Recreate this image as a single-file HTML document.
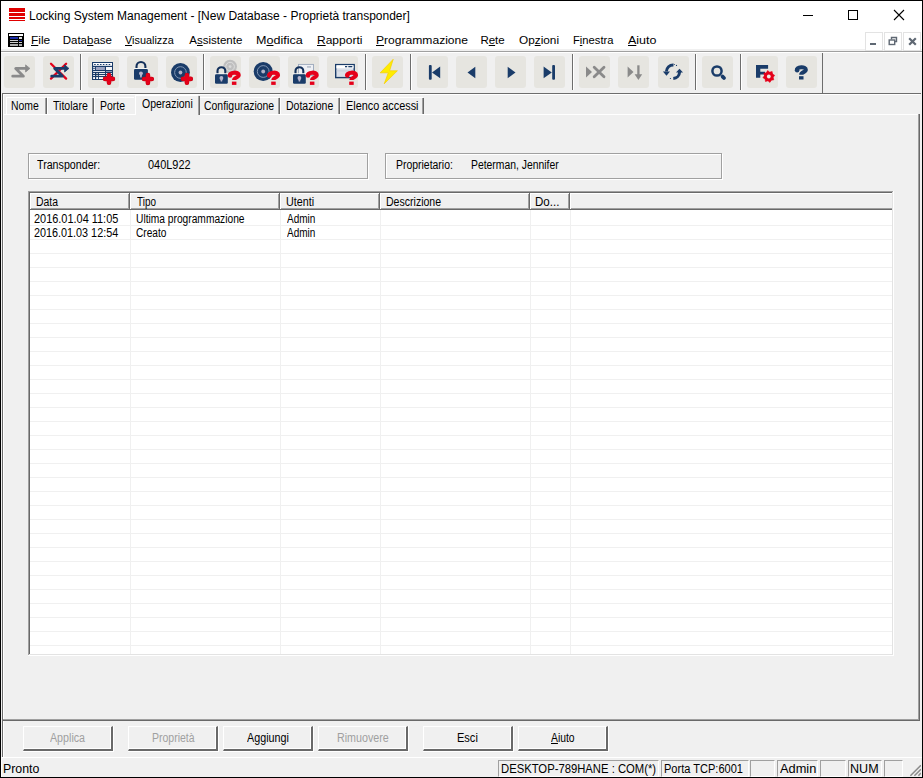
<!DOCTYPE html>
<html><head><meta charset="utf-8"><style>
html,body{margin:0;padding:0;}
body{width:923px;height:778px;position:relative;overflow:hidden;background:#f0f0f0;font-family:'Liberation Sans', sans-serif;}
.t{position:absolute;white-space:pre;line-height:13px;font-family:'Liberation Sans', sans-serif;}
.r{position:absolute;}
.u{text-decoration:underline;text-underline-offset:1px;}
svg{position:absolute;}
</style></head><body>

<div class="r" style="left:0px;top:0px;width:923px;height:51px;background:#ffffff;"></div>
<div class="r" style="left:0px;top:49px;width:923px;height:2px;background:#f0f0f0;"></div>
<div class="r" style="left:0px;top:51px;width:923px;height:1px;background:#a0a0a0;"></div>
<div class="r" style="left:0px;top:52px;width:923px;height:1px;background:#ffffff;"></div>
<div class="r" style="left:9px;top:8px;width:16px;height:4px;background:#e00000;"></div>
<div class="r" style="left:9px;top:13px;width:16px;height:3px;background:#e00000;"></div>
<div class="r" style="left:9px;top:17px;width:16px;height:2px;background:#e00000;"></div>
<div class="r" style="left:9px;top:20px;width:16px;height:1px;background:#e00000;"></div>
<div class="t" style="left:29.00px;top:9px;font-size:12px;color:#000;line-height:14px">Locking System Management - [New Database - Proprietà transponder]</div>
<div class="r" style="left:803px;top:15px;width:10px;height:1px;background:#000;"></div>
<div class="r" style="left:848px;top:10px;width:8px;height:8px;border:1px solid #000"></div>
<svg style="left:893px;top:9px" width="12" height="12" viewBox="0 0 12 12"><path d="M1 1L11 11M11 1L1 11" stroke="#000" stroke-width="1.1"/></svg>
<svg style="left:8px;top:33px" width="16" height="14" viewBox="0 0 16 14"><rect x="0" y="0" width="16" height="14" fill="#000"/><rect x="1" y="1" width="14" height="2" fill="#fff"/><rect x="2" y="4" width="8" height="2" fill="#1c2ea8"/><rect x="11" y="4" width="3" height="2" fill="#ddd"/><rect x="2" y="7" width="8" height="1" fill="#ccc"/><rect x="11" y="7" width="3" height="1" fill="#1c2ea8"/><rect x="2" y="9" width="8" height="1" fill="#ccc"/><rect x="11" y="9" width="3" height="1" fill="#ccc"/><rect x="2" y="11" width="8" height="2" fill="#aaa"/><rect x="11" y="11" width="3" height="2" fill="#aaa"/></svg>
<div class="t" style="left:30.66px;top:34px;font-size:11.5px;color:#000;transform:scaleX(1.035);transform-origin:0 0;"><span class="u">F</span>ile</div>
<div class="t" style="left:62.70px;top:34px;font-size:11.5px;color:#000;">Data<span class="u">b</span>ase</div>
<div class="t" style="left:125.40px;top:34px;font-size:11.5px;color:#000;transform:scaleX(0.944);transform-origin:0 0;"><span class="u">V</span>isualizza</div>
<div class="t" style="left:189.30px;top:34px;font-size:11.5px;color:#000;">A<span class="u">s</span>sistente</div>
<div class="t" style="left:255.71px;top:34px;font-size:11.5px;color:#000;transform:scaleX(1.090);transform-origin:0 0;">M<span class="u">o</span>difica</div>
<div class="t" style="left:316.55px;top:34px;font-size:11.5px;color:#000;transform:scaleX(1.045);transform-origin:0 0;"><span class="u">R</span>apporti</div>
<div class="t" style="left:375.55px;top:34px;font-size:11.5px;color:#000;transform:scaleX(1.051);transform-origin:0 0;"><span class="u">P</span>rogrammazione</div>
<div class="t" style="left:480.40px;top:34px;font-size:11.5px;color:#000;">R<span class="u">e</span>te</div>
<div class="t" style="left:518.70px;top:34px;font-size:11.5px;color:#000;transform:scaleX(1.026);transform-origin:0 0;">Op<span class="u">z</span>ioni</div>
<div class="t" style="left:572.83px;top:34px;font-size:11.5px;color:#000;transform:scaleX(0.973);transform-origin:0 0;">F<span class="u">i</span>nestra</div>
<div class="t" style="left:628.40px;top:34px;font-size:11.5px;color:#000;transform:scaleX(1.085);transform-origin:0 0;"><span class="u">A</span>iuto</div>
<div class="r" style="left:865px;top:32px;width:16px;height:17px;border:1px solid #e3e3e3;background:#fff"></div>
<div class="r" style="left:884px;top:32px;width:16px;height:17px;border:1px solid #e3e3e3;background:#fff"></div>
<div class="r" style="left:903px;top:32px;width:16px;height:17px;border:1px solid #e3e3e3;background:#fff"></div>
<div class="r" style="left:870px;top:43px;width:6px;height:2px;background:#5f6873;"></div>
<svg style="left:888px;top:36px" width="10" height="10" viewBox="0 0 10 10"><path d="M3.5 3.5V1.5H8.5V5.5H6.5" fill="none" stroke="#5f6873" stroke-width="1.4"/><rect x="1.2" y="4" width="5.5" height="4.5" fill="none" stroke="#5f6873" stroke-width="1.4"/></svg>
<svg style="left:908px;top:37px" width="9" height="9" viewBox="0 0 9 9"><path d="M1.2 1.2L7.8 7.8M7.8 1.2L1.2 7.8" stroke="#5f6873" stroke-width="2.2"/></svg>
<div class="r" style="left:2px;top:93px;width:919px;height:1px;background:#6d6d6d;"></div>
<div class="r" style="left:822px;top:53px;width:1px;height:40px;background:#6d6d6d;"></div>
<div class="r" style="left:4px;top:56px;width:31px;height:32px;background:#e6e5e0;border-radius:3px"></div>
<div class="r" style="left:43px;top:56px;width:31px;height:32px;background:#e6e5e0;border-radius:3px"></div>
<div class="r" style="left:88px;top:56px;width:31px;height:32px;background:#e6e5e0;border-radius:3px"></div>
<div class="r" style="left:127px;top:56px;width:31px;height:32px;background:#e6e5e0;border-radius:3px"></div>
<div class="r" style="left:166px;top:56px;width:31px;height:32px;background:#e6e5e0;border-radius:3px"></div>
<div class="r" style="left:210px;top:56px;width:31px;height:32px;background:#e6e5e0;border-radius:3px"></div>
<div class="r" style="left:249px;top:56px;width:31px;height:32px;background:#e6e5e0;border-radius:3px"></div>
<div class="r" style="left:288px;top:56px;width:31px;height:32px;background:#e6e5e0;border-radius:3px"></div>
<div class="r" style="left:327px;top:56px;width:31px;height:32px;background:#e6e5e0;border-radius:3px"></div>
<div class="r" style="left:372px;top:56px;width:31px;height:32px;background:#e6e5e0;border-radius:3px"></div>
<div class="r" style="left:417px;top:56px;width:31px;height:32px;background:#e6e5e0;border-radius:3px"></div>
<div class="r" style="left:456px;top:56px;width:31px;height:32px;background:#e6e5e0;border-radius:3px"></div>
<div class="r" style="left:495px;top:56px;width:31px;height:32px;background:#e6e5e0;border-radius:3px"></div>
<div class="r" style="left:534px;top:56px;width:31px;height:32px;background:#e6e5e0;border-radius:3px"></div>
<div class="r" style="left:579px;top:56px;width:31px;height:32px;background:#e6e5e0;border-radius:3px"></div>
<div class="r" style="left:618px;top:56px;width:31px;height:32px;background:#e6e5e0;border-radius:3px"></div>
<div class="r" style="left:658px;top:56px;width:31px;height:32px;background:#e6e5e0;border-radius:3px"></div>
<div class="r" style="left:702px;top:56px;width:31px;height:32px;background:#e6e5e0;border-radius:3px"></div>
<div class="r" style="left:747px;top:56px;width:31px;height:32px;background:#e6e5e0;border-radius:3px"></div>
<div class="r" style="left:786px;top:56px;width:31px;height:32px;background:#e6e5e0;border-radius:3px"></div>
<div class="r" style="left:80px;top:54px;width:1px;height:36px;background:#6d6d6d;"></div>
<div class="r" style="left:81px;top:54px;width:1px;height:36px;background:#ffffff;"></div>
<div class="r" style="left:203px;top:54px;width:1px;height:36px;background:#6d6d6d;"></div>
<div class="r" style="left:204px;top:54px;width:1px;height:36px;background:#ffffff;"></div>
<div class="r" style="left:365px;top:54px;width:1px;height:36px;background:#6d6d6d;"></div>
<div class="r" style="left:366px;top:54px;width:1px;height:36px;background:#ffffff;"></div>
<div class="r" style="left:410px;top:54px;width:1px;height:36px;background:#6d6d6d;"></div>
<div class="r" style="left:411px;top:54px;width:1px;height:36px;background:#ffffff;"></div>
<div class="r" style="left:572px;top:54px;width:1px;height:36px;background:#6d6d6d;"></div>
<div class="r" style="left:573px;top:54px;width:1px;height:36px;background:#ffffff;"></div>
<div class="r" style="left:695px;top:54px;width:1px;height:36px;background:#6d6d6d;"></div>
<div class="r" style="left:696px;top:54px;width:1px;height:36px;background:#ffffff;"></div>
<div class="r" style="left:740px;top:54px;width:1px;height:36px;background:#6d6d6d;"></div>
<div class="r" style="left:741px;top:54px;width:1px;height:36px;background:#ffffff;"></div>
<svg style="left:0;top:0" width="923" height="100" viewBox="0 0 923 100"><path d="M12.7 76.2H23.4L15.7 68.4H26.2" fill="none" stroke="#8a8a8a" stroke-width="2.8" stroke-linecap="round" stroke-linejoin="round"/><path d="M25.6 64.9L29.9 68.4L25.6 72Z" fill="#8a8a8a" stroke="#8a8a8a" stroke-width="0.8" stroke-linejoin="round"/><path d="M51 63.8L66.1 78.6M66.1 63.8L51 78.6" stroke="#e5001a" stroke-width="2.3" stroke-linecap="round"/><path d="M51.7 76.2H62.4L54.7 68.4H65.2" fill="none" stroke="#1a3c69" stroke-width="2.8" stroke-linecap="round" stroke-linejoin="round"/><path d="M64.6 64.9L68.9 68.4L64.6 72Z" fill="#1a3c69" stroke="#1a3c69" stroke-width="0.8" stroke-linejoin="round"/><rect x="92" y="62" width="21" height="18" fill="#1a3c69"/><rect x="93.1" y="63" width="18.9" height="2.8" fill="#fff"/><rect x="94.0" y="64" width="1.9" height="0.9" rx="0.4" fill="#1a3c69"/><rect x="96.9" y="64" width="1.9" height="0.9" rx="0.4" fill="#1a3c69"/><rect x="99.8" y="64" width="1.9" height="0.9" rx="0.4" fill="#1a3c69"/><rect x="102.7" y="64" width="1.9" height="0.9" rx="0.4" fill="#1a3c69"/><rect x="105.6" y="64" width="1.9" height="0.9" rx="0.4" fill="#1a3c69"/><rect x="108.5" y="64" width="1.9" height="0.9" rx="0.4" fill="#1a3c69"/><rect x="93.1" y="67.2" width="1.9" height="1" fill="#fff"/><rect x="93.1" y="68.9" width="1.9" height="1" fill="#fff"/><rect x="95.9" y="67" width="9" height="3" fill="#9ca3bf"/><rect x="106" y="67" width="6" height="3" fill="#f4f4f6"/><rect x="93.1" y="71.1" width="11.9" height="0.9" fill="#f4f6fa"/><rect x="106" y="71.1" width="6" height="0.9" fill="#9ca3bf"/><rect x="93.1" y="73.1" width="1.9" height="0.9" fill="#fff"/><rect x="96.2" y="73.1" width="1.9" height="0.9" fill="#d8d8d0"/><rect x="99" y="73.1" width="6" height="0.9" fill="#fff"/><rect x="106" y="73.1" width="6" height="0.9" fill="#fff"/><rect x="93.1" y="75.1" width="1.9" height="0.9" fill="#fff"/><rect x="96.2" y="75.1" width="1.9" height="0.9" fill="#d8d8d0"/><rect x="99" y="75.1" width="6" height="0.9" fill="#fff"/><rect x="106" y="75.1" width="6" height="0.9" fill="#fff"/><rect x="93.1" y="77.1" width="1.9" height="1.9" fill="#fff"/><rect x="96.2" y="77.1" width="1.9" height="1.9" fill="#fff"/><rect x="99" y="77.1" width="6" height="1.9" fill="#fff"/><path d="M105.1 78.9H112.9M109 75.0V82.80000000000001" stroke="#c4000f" stroke-width="4.6" stroke-linecap="round"/><path d="M105.1 78.9H112.9M109 75.0V82.80000000000001" stroke="#e5001a" stroke-width="3.6" stroke-linecap="round"/><path d="M136.5 69V66.45A4.45 4.45 0 0 1 145.39999999999998 66.45V69" fill="none" stroke="#13305a" stroke-width="2.1"/><rect x="133.5" y="68" width="14.9" height="1" fill="#f4f4f2"/><rect x="134" y="69" width="13.9" height="10.8" rx="1.2" fill="#1a3c69"/><circle cx="140.95" cy="73.32" r="1.9" fill="#b9b6cc"/><path d="M139.75 73.86L140.25 77.424H141.64999999999998L142.14999999999998 73.86Z" fill="#b9b6cc"/><path d="M144.0 79H151.8M147.9 75.1V82.9" stroke="#c4000f" stroke-width="4.6" stroke-linecap="round"/><path d="M144.0 79H151.8M147.9 75.1V82.9" stroke="#e5001a" stroke-width="3.6" stroke-linecap="round"/><circle cx="180.45" cy="72.5" r="9.4" fill="#1a3c69"/><circle cx="180.45" cy="72.5" r="5.828" fill="none" stroke="#8397b4" stroke-width="1"/><circle cx="180.45" cy="72.5" r="1.8800000000000001" fill="#b1b3c8"/><path d="M183.0 78.9H190.8M186.9 75.0V82.80000000000001" stroke="#c4000f" stroke-width="4.6" stroke-linecap="round"/><path d="M183.0 78.9H190.8M186.9 75.0V82.80000000000001" stroke="#e5001a" stroke-width="3.6" stroke-linecap="round"/><circle cx="230.1" cy="66.6" r="6.9" fill="#bfbfbf"/><circle cx="230.1" cy="66.6" r="4.2780000000000005" fill="none" stroke="#dedede" stroke-width="1"/><circle cx="230.1" cy="66.6" r="1.3800000000000001" fill="#dcdcdc"/><path d="M217.5 74.2V71.10000000000001A3.9000000000000004 3.9000000000000004 0 0 1 225.3 71.10000000000001V74.2" fill="none" stroke="#13305a" stroke-width="2.1"/><rect x="214.5" y="73.2" width="13.8" height="1" fill="#f4f4f2"/><rect x="215" y="74.2" width="12.8" height="9.5" rx="1.2" fill="#1a3c69"/><circle cx="221.4" cy="78.0" r="1.9" fill="#b9b6cc"/><path d="M220.20000000000002 78.47500000000001L220.70000000000002 81.61H222.1L222.6 78.47500000000001Z" fill="#b9b6cc"/><g transform="translate(227.5 70.6) scale(1.1)"><path d="M2 4.6C2 1.2 10.2 0.9 10.2 4.1C10.2 6.4 6 6.2 6 8.6" fill="none" stroke="#e5001a" stroke-width="3.7"/><circle cx="2.3" cy="4.5" r="2.05" fill="#e5001a"/><rect x="4" y="10" width="4.1" height="3" fill="#e5001a"/></g><circle cx="263.2" cy="71.5" r="9.5" fill="#1a3c69"/><circle cx="263.2" cy="71.5" r="5.89" fill="none" stroke="#8397b4" stroke-width="1"/><circle cx="263.2" cy="71.5" r="1.9000000000000001" fill="#b1b3c8"/><g transform="translate(266.8 70.6) scale(1.1)"><path d="M2 4.6C2 1.2 10.2 0.9 10.2 4.1C10.2 6.4 6 6.2 6 8.6" fill="none" stroke="#e5001a" stroke-width="3.7"/><circle cx="2.3" cy="4.5" r="2.05" fill="#e5001a"/><rect x="4" y="10" width="4.1" height="3" fill="#e5001a"/></g><rect x="298.5" y="64.4" width="15" height="11" fill="#eef0f4" stroke="#9aa7ba" stroke-width="0.9"/><rect x="307" y="66.5" width="4" height="0.9" fill="#8894a8"/><path d="M295.5 74.2V71.10000000000001A3.9000000000000004 3.9000000000000004 0 0 1 303.29999999999995 71.10000000000001V74.2" fill="none" stroke="#13305a" stroke-width="2.1"/><rect x="292.5" y="73.2" width="13.8" height="1" fill="#f4f4f2"/><rect x="293" y="74.2" width="12.8" height="9.5" rx="1.2" fill="#1a3c69"/><circle cx="299.4" cy="78.0" r="1.9" fill="#b9b6cc"/><path d="M298.2 78.47500000000001L298.7 81.61H300.09999999999997L300.59999999999997 78.47500000000001Z" fill="#b9b6cc"/><g transform="translate(305.5 70.6) scale(1.1)"><path d="M2 4.6C2 1.2 10.2 0.9 10.2 4.1C10.2 6.4 6 6.2 6 8.6" fill="none" stroke="#e5001a" stroke-width="3.7"/><circle cx="2.3" cy="4.5" r="2.05" fill="#e5001a"/><rect x="4" y="10" width="4.1" height="3" fill="#e5001a"/></g><rect x="335.7" y="64.6" width="18.5" height="13" fill="#d9dfe9" stroke="#1a3c69" stroke-width="1.4"/><rect x="336.4" y="65.3" width="17.1" height="3" fill="#fff"/><rect x="345" y="66" width="2.2" height="1.3" fill="#1a3c69"/><rect x="348.3" y="66" width="4" height="1.3" fill="#1a3c69"/><rect x="336.4" y="70.5" width="17.1" height="0.8" fill="#c4ccd9"/><g transform="translate(344.8 70.6) scale(1.1)"><path d="M2 4.6C2 1.2 10.2 0.9 10.2 4.1C10.2 6.4 6 6.2 6 8.6" fill="none" stroke="#e5001a" stroke-width="3.7"/><circle cx="2.3" cy="4.5" r="2.05" fill="#e5001a"/><rect x="4" y="10" width="4.1" height="3" fill="#e5001a"/></g><path d="M393.2 59.3L380.2 72.8H388.3L384.2 83.8L397.4 70.8H389.6Z" fill="#ffec00" stroke="#f7cf00" stroke-width="0.7" stroke-linejoin="round"/><rect x="428.9" y="65" width="2.8" height="14.7" rx="1" fill="#1a3c69"/><path d="M432 72.4L440.2 66.6V78.3Z" fill="#1a3c69"/><path d="M467.5 72.5L475.3 66.8V78.3Z" fill="#1a3c69"/><path d="M515.5 72.5L507.7 66.8V78.3Z" fill="#1a3c69"/><path d="M551.8 72.4L543.6 66.6V78.3Z" fill="#1a3c69"/><rect x="552.2" y="65" width="2.8" height="14.7" rx="1" fill="#1a3c69"/><path d="M586 66.5L592 72L586 77.5Z" fill="#8a8a8a"/><path d="M594.2 67.2L604 76.8M604 67.2L594.2 76.8" stroke="#8a8a8a" stroke-width="2.8" stroke-linecap="round"/><path d="M627.6 66.5L633.5 72L627.6 77.5Z" fill="#8a8a8a"/><path d="M638.4 65.3V76" stroke="#8a8a8a" stroke-width="2.3"/><path d="M634.6 74.2H642.2L638.4 80Z" fill="#8a8a8a"/><path d="M673.5 64.9A6.8 6.8 0 0 0 666.4 71.6" fill="none" stroke="#1a3c69" stroke-width="3"/><path d="M662.9 71.4H670L666.5 75.8Z" fill="#1a3c69"/><path d="M673.3 78.5A6.8 6.8 0 0 0 679.6 72" fill="none" stroke="#1a3c69" stroke-width="3"/><path d="M676 72.6H683L679.5 68.7Z" fill="#1a3c69"/><circle cx="676.5" cy="65.4" r="0.6" fill="#1a3c69"/><circle cx="670.4" cy="78.5" r="0.6" fill="#1a3c69"/><circle cx="674.4" cy="64.4" r="0.5" fill="#1a3c69"/><circle cx="717" cy="71" r="4.6" fill="none" stroke="#1a3c69" stroke-width="2.5"/><path d="M722.6 76.6L724 78" stroke="#1a3c69" stroke-width="3.8" stroke-linecap="round"/><path d="M756 65H768.1V68.7H760.3V71.7H765V74.4H760.3V77.8H756Z" fill="#1a3c69"/><polygon points="774.68,75.33 773.12,77.36 773.79,79.83 771.24,80.16 769.97,82.38 767.94,80.82 765.47,81.49 765.14,78.94 762.92,77.67 764.48,75.64 763.81,73.17 766.36,72.84 767.63,70.62 769.66,72.18 772.13,71.51 772.46,74.06" fill="#e5001a" stroke="#e5001a" stroke-width="0.6" stroke-linejoin="round"/><circle cx="768.8" cy="76.5" r="4.6" fill="#e5001a"/><circle cx="768.8" cy="76.5" r="1.9" fill="#ebeae5"/><g transform="translate(794.6 65.2) scale(1.1)"><path d="M2 4.6C2 1.2 10.2 0.9 10.2 4.1C10.2 6.4 6 6.2 6 8.6" fill="none" stroke="#1a3c69" stroke-width="3.7"/><circle cx="2.3" cy="4.5" r="2.05" fill="#1a3c69"/><rect x="4" y="10" width="4.1" height="3" fill="#1a3c69"/></g></svg>
<div class="r" style="left:2px;top:93px;width:1px;height:664px;background:#6d6d6d;"></div>
<div class="r" style="left:3px;top:94px;width:1px;height:663px;background:#ffffff;"></div>
<div class="r" style="left:3px;top:94px;width:917px;height:1px;background:#ffffff;"></div>
<div class="r" style="left:3px;top:114px;width:916px;height:1px;background:#ffffff;"></div>
<div class="r" style="left:918px;top:114px;width:1px;height:606px;background:#a0a0a0;"></div>
<div class="r" style="left:919px;top:114px;width:1px;height:607px;background:#696969;"></div>
<div class="r" style="left:3px;top:719px;width:916px;height:1px;background:#a0a0a0;"></div>
<div class="r" style="left:3px;top:720px;width:917px;height:1px;background:#696969;"></div>
<div class="r" style="left:6px;top:97px;width:41px;height:17px;background:#f0f0f0;"></div>
<div class="r" style="left:6px;top:97px;width:40px;height:1px;background:#ffffff;"></div>
<div class="r" style="left:6px;top:97px;width:1px;height:17px;background:#ffffff;"></div>
<div class="r" style="left:45px;top:98px;width:1px;height:16px;background:#a0a0a0;"></div>
<div class="r" style="left:46px;top:98px;width:1px;height:16px;background:#696969;"></div>
<div class="t" style="left:10.53px;top:100px;font-size:12px;color:#000;transform:scaleX(0.868);transform-origin:0 0;">Nome</div>
<div class="r" style="left:47px;top:97px;width:47px;height:17px;background:#f0f0f0;"></div>
<div class="r" style="left:47px;top:97px;width:46px;height:1px;background:#ffffff;"></div>
<div class="r" style="left:47px;top:97px;width:1px;height:17px;background:#ffffff;"></div>
<div class="r" style="left:92px;top:98px;width:1px;height:16px;background:#a0a0a0;"></div>
<div class="r" style="left:93px;top:98px;width:1px;height:16px;background:#696969;"></div>
<div class="t" style="left:53.00px;top:100px;font-size:12px;color:#000;transform:scaleX(0.879);transform-origin:0 0;">Titolare</div>
<div class="r" style="left:94px;top:97px;width:41px;height:17px;background:#f0f0f0;"></div>
<div class="r" style="left:94px;top:97px;width:40px;height:1px;background:#ffffff;"></div>
<div class="r" style="left:94px;top:97px;width:1px;height:17px;background:#ffffff;"></div>
<div class="t" style="left:99.83px;top:100px;font-size:12px;color:#000;transform:scaleX(0.870);transform-origin:0 0;">Porte</div>
<div class="r" style="left:199px;top:97px;width:81px;height:17px;background:#f0f0f0;"></div>
<div class="r" style="left:199px;top:97px;width:80px;height:1px;background:#ffffff;"></div>
<div class="r" style="left:199px;top:97px;width:1px;height:17px;background:#ffffff;"></div>
<div class="r" style="left:278px;top:98px;width:1px;height:16px;background:#a0a0a0;"></div>
<div class="r" style="left:279px;top:98px;width:1px;height:16px;background:#696969;"></div>
<div class="t" style="left:203.90px;top:100px;font-size:12px;color:#000;transform:scaleX(0.869);transform-origin:0 0;">Configurazione</div>
<div class="r" style="left:280px;top:97px;width:60px;height:17px;background:#f0f0f0;"></div>
<div class="r" style="left:280px;top:97px;width:59px;height:1px;background:#ffffff;"></div>
<div class="r" style="left:280px;top:97px;width:1px;height:17px;background:#ffffff;"></div>
<div class="r" style="left:338px;top:98px;width:1px;height:16px;background:#a0a0a0;"></div>
<div class="r" style="left:339px;top:98px;width:1px;height:16px;background:#696969;"></div>
<div class="t" style="left:285.92px;top:100px;font-size:12px;color:#000;transform:scaleX(0.875);transform-origin:0 0;">Dotazione</div>
<div class="r" style="left:340px;top:97px;width:84px;height:17px;background:#f0f0f0;"></div>
<div class="r" style="left:340px;top:97px;width:83px;height:1px;background:#ffffff;"></div>
<div class="r" style="left:340px;top:97px;width:1px;height:17px;background:#ffffff;"></div>
<div class="r" style="left:422px;top:98px;width:1px;height:16px;background:#a0a0a0;"></div>
<div class="r" style="left:423px;top:98px;width:1px;height:16px;background:#696969;"></div>
<div class="t" style="left:345.69px;top:100px;font-size:12px;color:#000;transform:scaleX(0.906);transform-origin:0 0;">Elenco accessi</div>
<div class="r" style="left:135px;top:95px;width:64px;height:20px;background:#f0f0f0;"></div>
<div class="r" style="left:135px;top:95px;width:63px;height:1px;background:#ffffff;"></div>
<div class="r" style="left:135px;top:95px;width:1px;height:20px;background:#ffffff;"></div>
<div class="r" style="left:198px;top:96px;width:1px;height:19px;background:#a0a0a0;"></div>
<div class="r" style="left:199px;top:96px;width:1px;height:19px;background:#696969;"></div>
<div class="t" style="left:141.80px;top:98px;font-size:12px;color:#000;transform:scaleX(0.874);transform-origin:0 0;">Operazioni</div>
<div class="r" style="left:29px;top:154px;width:338px;height:24px;border:1px solid #fff"></div>
<div class="r" style="left:28px;top:153px;width:338px;height:24px;border:1px solid #a0a0a0"></div>
<div class="r" style="left:386px;top:154px;width:335px;height:24px;border:1px solid #fff"></div>
<div class="r" style="left:385px;top:153px;width:335px;height:24px;border:1px solid #a0a0a0"></div>
<div class="t" style="left:37.30px;top:159px;font-size:12px;color:#000;transform:scaleX(0.890);transform-origin:0 0;">Transponder:</div>
<div class="t" style="left:148.10px;top:159px;font-size:12px;color:#000;transform:scaleX(0.911);transform-origin:0 0;">040L922</div>
<div class="t" style="left:395.63px;top:159px;font-size:12px;color:#000;transform:scaleX(0.870);transform-origin:0 0;">Proprietario:</div>
<div class="t" style="left:470.54px;top:159px;font-size:12px;color:#000;transform:scaleX(0.864);transform-origin:0 0;">Peterman, Jennifer</div>
<div class="r" style="left:28px;top:191px;width:866px;height:465px;background:#ffffff;"></div>
<div class="r" style="left:28px;top:191px;width:865px;height:1px;background:#a0a0a0;"></div>
<div class="r" style="left:28px;top:191px;width:1px;height:464px;background:#a0a0a0;"></div>
<div class="r" style="left:29px;top:192px;width:863px;height:1px;background:#696969;"></div>
<div class="r" style="left:29px;top:192px;width:1px;height:462px;background:#696969;"></div>
<div class="r" style="left:892px;top:192px;width:1px;height:463px;background:#e3e3e3;"></div>
<div class="r" style="left:29px;top:654px;width:864px;height:1px;background:#e3e3e3;"></div>
<div class="r" style="left:893px;top:191px;width:1px;height:465px;background:#ffffff;"></div>
<div class="r" style="left:28px;top:655px;width:866px;height:1px;background:#ffffff;"></div>
<div class="r" style="left:30px;top:225px;width:862px;height:1px;background:#f0f0f0;"></div>
<div class="r" style="left:30px;top:239px;width:862px;height:1px;background:#f0f0f0;"></div>
<div class="r" style="left:30px;top:253px;width:862px;height:1px;background:#f0f0f0;"></div>
<div class="r" style="left:30px;top:267px;width:862px;height:1px;background:#f0f0f0;"></div>
<div class="r" style="left:30px;top:281px;width:862px;height:1px;background:#f0f0f0;"></div>
<div class="r" style="left:30px;top:295px;width:862px;height:1px;background:#f0f0f0;"></div>
<div class="r" style="left:30px;top:309px;width:862px;height:1px;background:#f0f0f0;"></div>
<div class="r" style="left:30px;top:323px;width:862px;height:1px;background:#f0f0f0;"></div>
<div class="r" style="left:30px;top:337px;width:862px;height:1px;background:#f0f0f0;"></div>
<div class="r" style="left:30px;top:351px;width:862px;height:1px;background:#f0f0f0;"></div>
<div class="r" style="left:30px;top:365px;width:862px;height:1px;background:#f0f0f0;"></div>
<div class="r" style="left:30px;top:379px;width:862px;height:1px;background:#f0f0f0;"></div>
<div class="r" style="left:30px;top:393px;width:862px;height:1px;background:#f0f0f0;"></div>
<div class="r" style="left:30px;top:407px;width:862px;height:1px;background:#f0f0f0;"></div>
<div class="r" style="left:30px;top:421px;width:862px;height:1px;background:#f0f0f0;"></div>
<div class="r" style="left:30px;top:435px;width:862px;height:1px;background:#f0f0f0;"></div>
<div class="r" style="left:30px;top:449px;width:862px;height:1px;background:#f0f0f0;"></div>
<div class="r" style="left:30px;top:463px;width:862px;height:1px;background:#f0f0f0;"></div>
<div class="r" style="left:30px;top:477px;width:862px;height:1px;background:#f0f0f0;"></div>
<div class="r" style="left:30px;top:491px;width:862px;height:1px;background:#f0f0f0;"></div>
<div class="r" style="left:30px;top:505px;width:862px;height:1px;background:#f0f0f0;"></div>
<div class="r" style="left:30px;top:519px;width:862px;height:1px;background:#f0f0f0;"></div>
<div class="r" style="left:30px;top:533px;width:862px;height:1px;background:#f0f0f0;"></div>
<div class="r" style="left:30px;top:547px;width:862px;height:1px;background:#f0f0f0;"></div>
<div class="r" style="left:30px;top:561px;width:862px;height:1px;background:#f0f0f0;"></div>
<div class="r" style="left:30px;top:575px;width:862px;height:1px;background:#f0f0f0;"></div>
<div class="r" style="left:30px;top:589px;width:862px;height:1px;background:#f0f0f0;"></div>
<div class="r" style="left:30px;top:603px;width:862px;height:1px;background:#f0f0f0;"></div>
<div class="r" style="left:30px;top:617px;width:862px;height:1px;background:#f0f0f0;"></div>
<div class="r" style="left:30px;top:631px;width:862px;height:1px;background:#f0f0f0;"></div>
<div class="r" style="left:30px;top:645px;width:862px;height:1px;background:#f0f0f0;"></div>
<div class="r" style="left:130px;top:210px;width:1px;height:444px;background:#f0f0f0;"></div>
<div class="r" style="left:280px;top:210px;width:1px;height:444px;background:#f0f0f0;"></div>
<div class="r" style="left:380px;top:210px;width:1px;height:444px;background:#f0f0f0;"></div>
<div class="r" style="left:530px;top:210px;width:1px;height:444px;background:#f0f0f0;"></div>
<div class="r" style="left:570px;top:210px;width:1px;height:444px;background:#f0f0f0;"></div>
<div class="r" style="left:30px;top:193px;width:862px;height:17px;background:#f0f0f0;"></div>
<div class="r" style="left:30px;top:193px;width:862px;height:1px;background:#ffffff;"></div>
<div class="r" style="left:30px;top:208px;width:862px;height:1px;background:#a0a0a0;"></div>
<div class="r" style="left:30px;top:209px;width:862px;height:1px;background:#696969;"></div>
<div class="r" style="left:30px;top:193px;width:1px;height:16px;background:#ffffff;"></div>
<div class="r" style="left:128px;top:194px;width:1px;height:14px;background:#a0a0a0;"></div>
<div class="r" style="left:129px;top:193px;width:1px;height:16px;background:#696969;"></div>
<div class="r" style="left:130px;top:193px;width:1px;height:16px;background:#ffffff;"></div>
<div class="r" style="left:278px;top:194px;width:1px;height:14px;background:#a0a0a0;"></div>
<div class="r" style="left:279px;top:193px;width:1px;height:16px;background:#696969;"></div>
<div class="r" style="left:280px;top:193px;width:1px;height:16px;background:#ffffff;"></div>
<div class="r" style="left:378px;top:194px;width:1px;height:14px;background:#a0a0a0;"></div>
<div class="r" style="left:379px;top:193px;width:1px;height:16px;background:#696969;"></div>
<div class="r" style="left:380px;top:193px;width:1px;height:16px;background:#ffffff;"></div>
<div class="r" style="left:528px;top:194px;width:1px;height:14px;background:#a0a0a0;"></div>
<div class="r" style="left:529px;top:193px;width:1px;height:16px;background:#696969;"></div>
<div class="r" style="left:530px;top:193px;width:1px;height:16px;background:#ffffff;"></div>
<div class="r" style="left:568px;top:194px;width:1px;height:14px;background:#a0a0a0;"></div>
<div class="r" style="left:569px;top:193px;width:1px;height:16px;background:#696969;"></div>
<div class="r" style="left:570px;top:193px;width:1px;height:16px;background:#ffffff;"></div>
<div class="t" style="left:35.63px;top:196px;font-size:12px;color:#000;transform:scaleX(0.868);transform-origin:0 0;">Data</div>
<div class="t" style="left:137.20px;top:196px;font-size:12px;color:#000;transform:scaleX(0.826);transform-origin:0 0;">Tipo</div>
<div class="t" style="left:285.70px;top:196px;font-size:12px;color:#000;transform:scaleX(0.897);transform-origin:0 0;">Utenti</div>
<div class="t" style="left:385.72px;top:196px;font-size:12px;color:#000;transform:scaleX(0.879);transform-origin:0 0;">Descrizione</div>
<div class="t" style="left:535.34px;top:196px;font-size:12px;color:#000;transform:scaleX(0.961);transform-origin:0 0;">Do...</div>
<div class="t" style="left:34.00px;top:213px;font-size:12px;color:#000;transform:scaleX(0.911);transform-origin:0 0;">2016.01.04 11:05</div>
<div class="t" style="left:135.75px;top:213px;font-size:12px;color:#000;transform:scaleX(0.852);transform-origin:0 0;">Ultima programmazione</div>
<div class="t" style="left:286.60px;top:213px;font-size:12px;color:#000;transform:scaleX(0.833);transform-origin:0 0;">Admin</div>
<div class="t" style="left:34.00px;top:227px;font-size:12px;color:#000;transform:scaleX(0.901);transform-origin:0 0;">2016.01.03 12:54</div>
<div class="t" style="left:135.60px;top:227px;font-size:12px;color:#000;transform:scaleX(0.844);transform-origin:0 0;">Creato</div>
<div class="t" style="left:286.60px;top:227px;font-size:12px;color:#000;transform:scaleX(0.833);transform-origin:0 0;">Admin</div>
<div class="r" style="left:23px;top:726px;width:90px;height:25px;background:#f0f0f0;box-sizing:border-box;border-left:1px solid #fff;border-top:1px solid #fff;border-right:2px solid #696969;border-bottom:2px solid #696969"></div>
<div class="r" style="left:24px;top:727px;width:87px;height:22px;box-sizing:border-box;border-right:1px solid #ffffff;border-bottom:1px solid #ffffff"></div>
<div class="r" style="left:113px;top:726px;width:1px;height:26px;background:#ffffff;"></div>
<div class="r" style="left:23px;top:751px;width:91px;height:1px;background:#ffffff;"></div>
<div class="t" style="left:50.00px;top:732px;font-size:12px;color:#a0a0a0;transform:scaleX(0.890);transform-origin:0 0;">Applica</div>
<div class="r" style="left:128px;top:726px;width:90px;height:25px;background:#f0f0f0;box-sizing:border-box;border-left:1px solid #fff;border-top:1px solid #fff;border-right:2px solid #696969;border-bottom:2px solid #696969"></div>
<div class="r" style="left:129px;top:727px;width:87px;height:22px;box-sizing:border-box;border-right:1px solid #ffffff;border-bottom:1px solid #ffffff"></div>
<div class="r" style="left:218px;top:726px;width:1px;height:26px;background:#ffffff;"></div>
<div class="r" style="left:128px;top:751px;width:91px;height:1px;background:#ffffff;"></div>
<div class="t" style="left:151.93px;top:732px;font-size:12px;color:#a0a0a0;transform:scaleX(0.875);transform-origin:0 0;">Proprietà</div>
<div class="r" style="left:223px;top:726px;width:90px;height:25px;background:#f0f0f0;box-sizing:border-box;border-left:1px solid #fff;border-top:1px solid #fff;border-right:2px solid #696969;border-bottom:2px solid #696969"></div>
<div class="r" style="left:224px;top:727px;width:87px;height:22px;box-sizing:border-box;border-right:1px solid #ffffff;border-bottom:1px solid #ffffff"></div>
<div class="r" style="left:313px;top:726px;width:1px;height:26px;background:#ffffff;"></div>
<div class="r" style="left:223px;top:751px;width:91px;height:1px;background:#ffffff;"></div>
<div class="t" style="left:246.80px;top:732px;font-size:12px;color:#000;transform:scaleX(0.896);transform-origin:0 0;">Aggiungi</div>
<div class="r" style="left:318px;top:726px;width:90px;height:25px;background:#f0f0f0;box-sizing:border-box;border-left:1px solid #fff;border-top:1px solid #fff;border-right:2px solid #696969;border-bottom:2px solid #696969"></div>
<div class="r" style="left:319px;top:727px;width:87px;height:22px;box-sizing:border-box;border-right:1px solid #ffffff;border-bottom:1px solid #ffffff"></div>
<div class="r" style="left:408px;top:726px;width:1px;height:26px;background:#ffffff;"></div>
<div class="r" style="left:318px;top:751px;width:91px;height:1px;background:#ffffff;"></div>
<div class="t" style="left:336.91px;top:732px;font-size:12px;color:#a0a0a0;transform:scaleX(0.893);transform-origin:0 0;">Rimuovere</div>
<div class="r" style="left:423px;top:726px;width:90px;height:25px;background:#f0f0f0;box-sizing:border-box;border-left:1px solid #fff;border-top:1px solid #fff;border-right:2px solid #696969;border-bottom:2px solid #696969"></div>
<div class="r" style="left:424px;top:727px;width:87px;height:22px;box-sizing:border-box;border-right:1px solid #ffffff;border-bottom:1px solid #ffffff"></div>
<div class="r" style="left:513px;top:726px;width:1px;height:26px;background:#ffffff;"></div>
<div class="r" style="left:423px;top:751px;width:91px;height:1px;background:#ffffff;"></div>
<div class="t" style="left:457.48px;top:732px;font-size:12px;color:#000;transform:scaleX(0.919);transform-origin:0 0;">Esci</div>
<div class="r" style="left:518px;top:726px;width:90px;height:25px;background:#f0f0f0;box-sizing:border-box;border-left:1px solid #fff;border-top:1px solid #fff;border-right:2px solid #696969;border-bottom:2px solid #696969"></div>
<div class="r" style="left:519px;top:727px;width:87px;height:22px;box-sizing:border-box;border-right:1px solid #ffffff;border-bottom:1px solid #ffffff"></div>
<div class="r" style="left:608px;top:726px;width:1px;height:26px;background:#ffffff;"></div>
<div class="r" style="left:518px;top:751px;width:91px;height:1px;background:#ffffff;"></div>
<div class="t" style="left:550.90px;top:732px;font-size:12px;color:#000;transform:scaleX(0.863);transform-origin:0 0;"><span class="u">A</span>iuto</div>
<div class="r" style="left:1px;top:757px;width:921px;height:1px;background:#ffffff;"></div>
<div class="r" style="left:1px;top:757px;width:1px;height:20px;background:#ffffff;"></div>
<div class="t" style="left:2.57px;top:763px;font-size:12px;color:#000;transform:scaleX(1.029);transform-origin:0 0;">Pronto</div>
<div class="r" style="left:498px;top:760px;width:161px;height:17px;box-sizing:border-box;border-left:1px solid #a0a0a0;border-top:1px solid #a0a0a0;border-right:1px solid #fff;border-bottom:1px solid #fff"></div>
<div class="t" style="left:500.66px;top:763px;font-size:12px;color:#000;transform:scaleX(0.939);transform-origin:0 0;">DESKTOP-789HANE : COM(*)</div>
<div class="r" style="left:661px;top:760px;width:88px;height:17px;box-sizing:border-box;border-left:1px solid #a0a0a0;border-top:1px solid #a0a0a0;border-right:1px solid #fff;border-bottom:1px solid #fff"></div>
<div class="t" style="left:664.08px;top:763px;font-size:12px;color:#000;transform:scaleX(0.920);transform-origin:0 0;">Porta TCP:6001</div>
<div class="r" style="left:750px;top:760px;width:25px;height:17px;box-sizing:border-box;border-left:1px solid #a0a0a0;border-top:1px solid #a0a0a0;border-right:1px solid #fff;border-bottom:1px solid #fff"></div>
<div class="r" style="left:777px;top:760px;width:41px;height:17px;box-sizing:border-box;border-left:1px solid #a0a0a0;border-top:1px solid #a0a0a0;border-right:1px solid #fff;border-bottom:1px solid #fff"></div>
<div class="t" style="left:779.70px;top:763px;font-size:12px;color:#000;transform:scaleX(1.067);transform-origin:0 0;">Admin</div>
<div class="r" style="left:820px;top:760px;width:26px;height:17px;box-sizing:border-box;border-left:1px solid #a0a0a0;border-top:1px solid #a0a0a0;border-right:1px solid #fff;border-bottom:1px solid #fff"></div>
<div class="r" style="left:848px;top:760px;width:34px;height:17px;box-sizing:border-box;border-left:1px solid #a0a0a0;border-top:1px solid #a0a0a0;border-right:1px solid #fff;border-bottom:1px solid #fff"></div>
<div class="t" style="left:849.95px;top:763px;font-size:12px;color:#000;transform:scaleX(1.046);transform-origin:0 0;">NUM</div>
<div class="r" style="left:884px;top:760px;width:19px;height:17px;box-sizing:border-box;border-left:1px solid #a0a0a0;border-top:1px solid #a0a0a0;border-right:1px solid #fff;border-bottom:1px solid #fff"></div>
<svg style="left:906px;top:763px" width="15" height="14" viewBox="0 0 15 14"><path d="M14.9 2.2L4.4 12.7M14.9 6.2L8.4 12.7M14.9 10.1L12.4 12.7" stroke="#8c8c8c" stroke-width="1.5"/></svg>
<div class="r" style="left:0px;top:0px;width:923px;height:1px;background:#000;"></div>
<div class="r" style="left:0px;top:777px;width:923px;height:1px;background:#000;"></div>
<div class="r" style="left:0px;top:0px;width:1px;height:778px;background:#000;"></div>
<div class="r" style="left:922px;top:0px;width:1px;height:778px;background:#000;"></div>
</body></html>
